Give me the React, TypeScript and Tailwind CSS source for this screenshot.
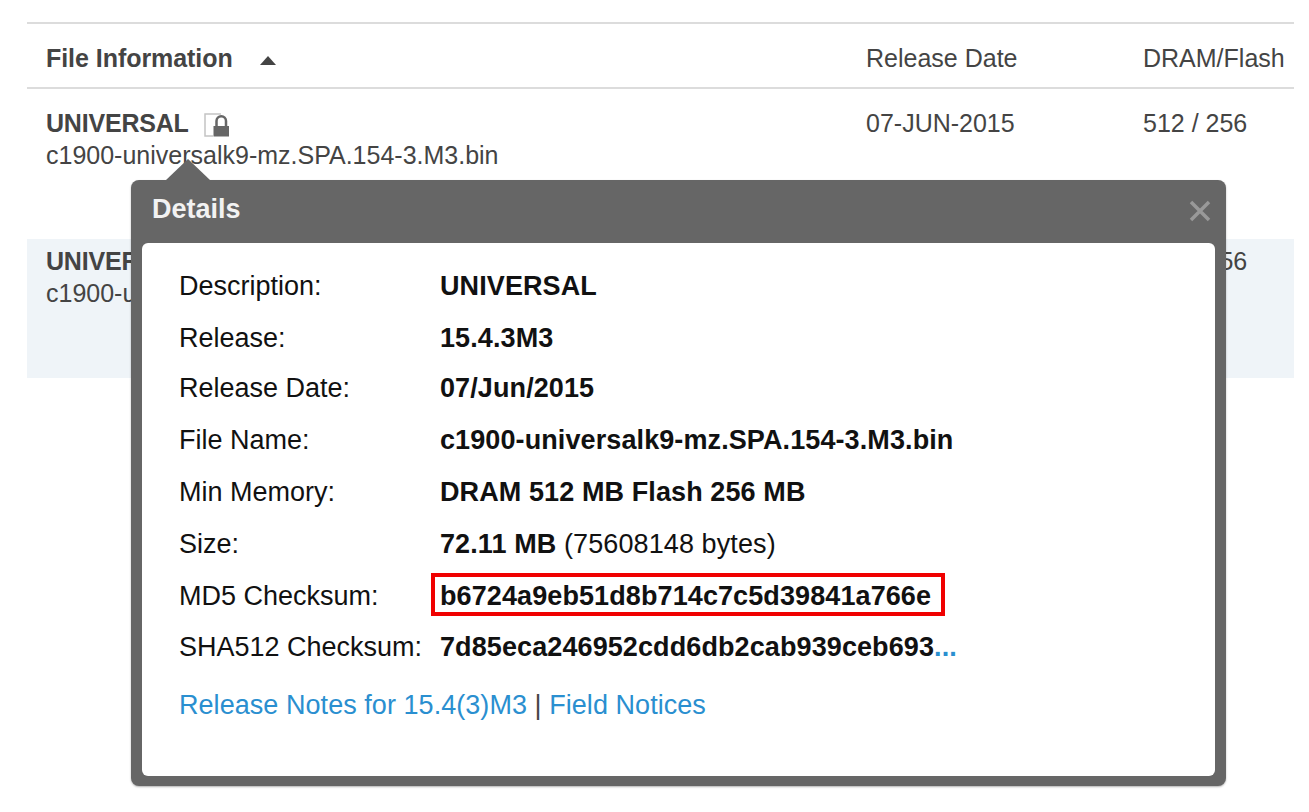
const details = [
  { label: "Description:", value: "UNIVERSAL", gap: "mt-[27px]" },
  { label: "Release:", value: "15.4.3M3", gap: "mt-[20px]" },
  { label: "Release Date:", value: "07/Jun/2015", gap: "mt-[18px]" },
  { label: "File Name:", value: "c1900-universalk9-mz.SPA.154-3.M3.bin", gap: "mt-[20px]" },
  { label: "Min Memory:", value: "DRAM 512 MB Flash 256 MB", gap: "mt-[20px]" },
];

function LockIcon() {
  return (
    <svg width="26" height="24" viewBox="0 0 26 24" className="ml-[15px] mt-[3px]">
      <path d="M9 23H1V1H17" fill="none" stroke="#c4c4c4" strokeWidth="1.5" />
      <rect x="9.500" y="13" width="15.500" height="10.500" fill="#666" />
      <path d="M12.500 13V8a4.750 4.750 0 0 1 9.500 0v5" fill="none" stroke="#666" strokeWidth="2.500" />
    </svg>
  );
}

function FileRow({ shaded, lock }: { shaded?: boolean; lock?: boolean }) {
  return (
    <div
      className={`grid grid-cols-[820px_277px_1fr] pl-[19px] ${
        shaded ? "h-[139px] bg-[#eff4f8] pt-[6px]" : "h-[150px] pt-[18px]"
      }`}
    >
      <div>
        <div className="flex h-[32px] items-center font-bold leading-[32px] tracking-[-0.2px]">
          UNIVERSAL
          {lock && <LockIcon />}
        </div>
        <div className="leading-[32px]">c1900-universalk9-mz.SPA.154-3.M3.bin</div>
      </div>
      <div className="leading-[32px]">07-JUN-2015</div>
      <div className="leading-[32px]">512 / 256</div>
    </div>
  );
}

export default function App() {
  return (
    <div className="relative h-[812px] w-[1309px] overflow-hidden bg-white pl-[27px] pr-[15px] pt-[22px] font-['Liberation_Sans',Arial,sans-serif] text-[25px] text-[#444]">
      <div className="grid h-[67px] grid-cols-[820px_277px_1fr] items-center border-y-2 border-[#dcdcdc] pl-[19px] pt-[6px]">
        <div className="flex items-center font-bold tracking-[-0.05px]">
          File Information
          <span className="ml-[27px] mt-[4px] h-0 w-0 border-x-[8px] border-b-[9px] border-x-transparent border-b-[#444]" />
        </div>
        <div>Release Date</div>
        <div>DRAM/Flash</div>
      </div>
      <FileRow lock />
      <FileRow shaded />

      <div className="absolute left-[131px] top-[180px] h-[606px] w-[1095px] rounded-[8px] bg-[#666] px-[11px] pb-[10px] text-[27px] shadow-[0_1px_2px_rgba(0,0,0,0.3)]">
        <span className="absolute -top-[21px] left-[35px] h-0 w-0 border-x-[22px] border-b-[21px] border-x-transparent border-b-[#666]" />
        <div className="relative flex h-[63px] items-center justify-between pb-[4px] pl-[10px] font-bold text-[#f2f2f2]">
          Details
          <svg width="22" height="22" viewBox="0 0 22 22" className="mr-[4px] mt-[3px]">
            <path d="M2 2l18 18M20 2L2 20" stroke="#999" strokeWidth="3.500" />
          </svg>
        </div>
        <div className="h-[533px] overflow-hidden rounded-[6px] bg-white pl-[37px] leading-[32px] text-[#111]">
          {details.map((d) => (
            <div key={d.label} className={`flex ${d.gap}`}>
              <div className="w-[261px] shrink-0">{d.label}</div>
              <div className="font-bold tracking-[0.1px]">{d.value}</div>
            </div>
          ))}
          <div className="mt-[20px] flex">
            <div className="w-[261px] shrink-0">Size:</div>
            <div className="tracking-[0.1px]">
              <span className="font-bold">72.11 MB</span> (75608148 bytes)
            </div>
          </div>
          <div className="mt-[20px] flex">
            <div className="w-[261px] shrink-0">MD5 Checksum:</div>
            <div className="-mb-[4px] -ml-[9px] -mt-[7px] border-[4px] border-[#f00000] pl-[5px] pr-[10px] pt-[3px] font-bold tracking-[0.1px]">
              b6724a9eb51d8b714c7c5d39841a766e
            </div>
          </div>
          <div className="mt-[19px] flex">
            <div className="w-[261px] shrink-0">SHA512 Checksum:</div>
            <div className="font-bold tracking-[0.1px]">
              7d85eca246952cdd6db2cab939ceb693<span className="text-[#2a8fd0]">...</span>
            </div>
          </div>
          <div className="mt-[26px] tracking-[0.05px] text-[#2a8fd0]">
            Release Notes for 15.4(3)M3 <span className="text-[#444]">|</span> Field Notices
          </div>
        </div>
      </div>
    </div>
  );
}
